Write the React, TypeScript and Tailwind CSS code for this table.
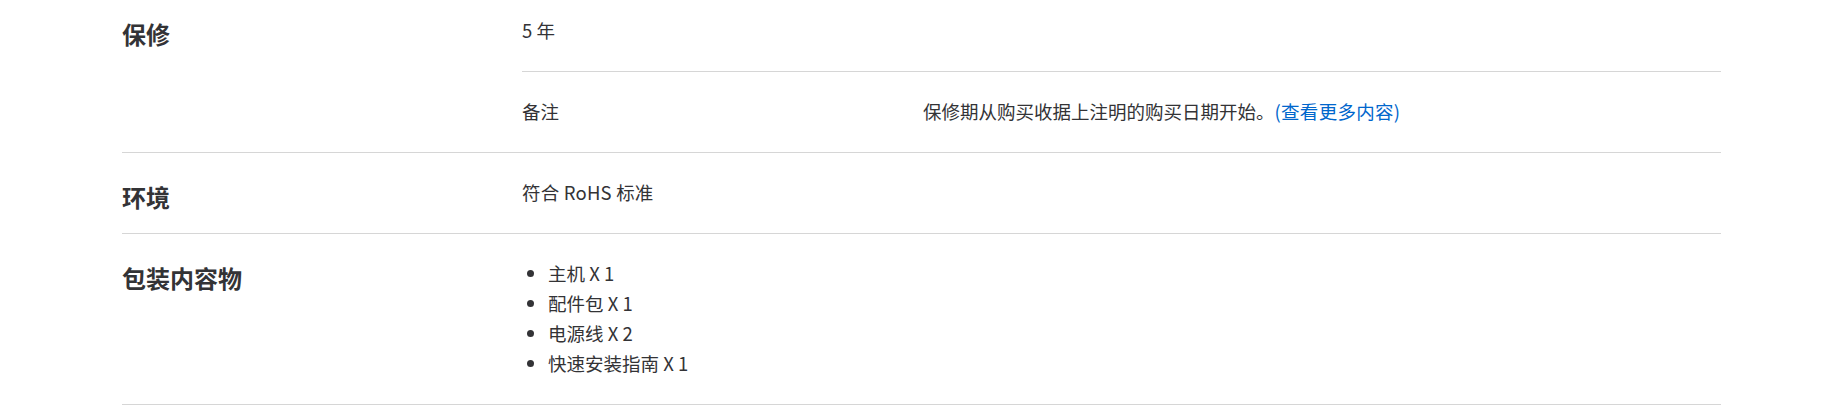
const font = { fontFamily: '"Noto Sans CJK SC", "Noto Sans", sans-serif' };

export default function App() {
  return (
    <div className="w-full h-[420px] bg-white overflow-hidden" style={font}>
      <div className="ml-[122px] w-[1599px] text-[#333336]">
        {/* 保修 */}
        <div className="flex border-b border-[#d6d6d6]">
          <h3 className="w-[400px] shrink-0 pt-[14px] text-[24px] leading-[40px] font-bold">保修</h3>
          <div className="flex-1">
            <div className="pt-[15px] pb-[26px] border-b border-[#d6d6d6] text-[18.5px] leading-[30px]">5 年</div>
            <div className="flex pt-[24px] pb-[26px] text-[18.5px] leading-[30px]">
              <div className="w-[401px] shrink-0">备注</div>
              <div>
                保修期从购买收据上注明的购买日期开始。
                <a href="#" className="text-[#0066cc] tracking-[0.3px]">(查看更多内容)</a>
              </div>
            </div>
          </div>
        </div>

        {/* 环境 */}
        <div className="flex items-start border-b border-[#d6d6d6] pt-[24px] pb-[26px]">
          <h3 className="w-[400px] shrink-0 text-[24px] leading-[40px] -mb-[10px] font-bold">环境</h3>
          <div className="flex-1 text-[18.5px] leading-[30px] tracking-[0.2px]">符合 RoHS 标准</div>
        </div>

        {/* 包装内容物 */}
        <div className="flex items-start border-b border-[#d6d6d6] pt-[24px] pb-[26px]">
          <h3 className="w-[400px] shrink-0 text-[24px] leading-[40px] font-bold">包装内容物</h3>
          <ul className="flex-1 list-disc pl-[26px] text-[18.5px] leading-[30px]">
            <li>主机 X 1</li>
            <li>配件包 X 1</li>
            <li>电源线 X 2</li>
            <li>快速安装指南 X 1</li>
          </ul>
        </div>
      </div>
    </div>
  );
}
